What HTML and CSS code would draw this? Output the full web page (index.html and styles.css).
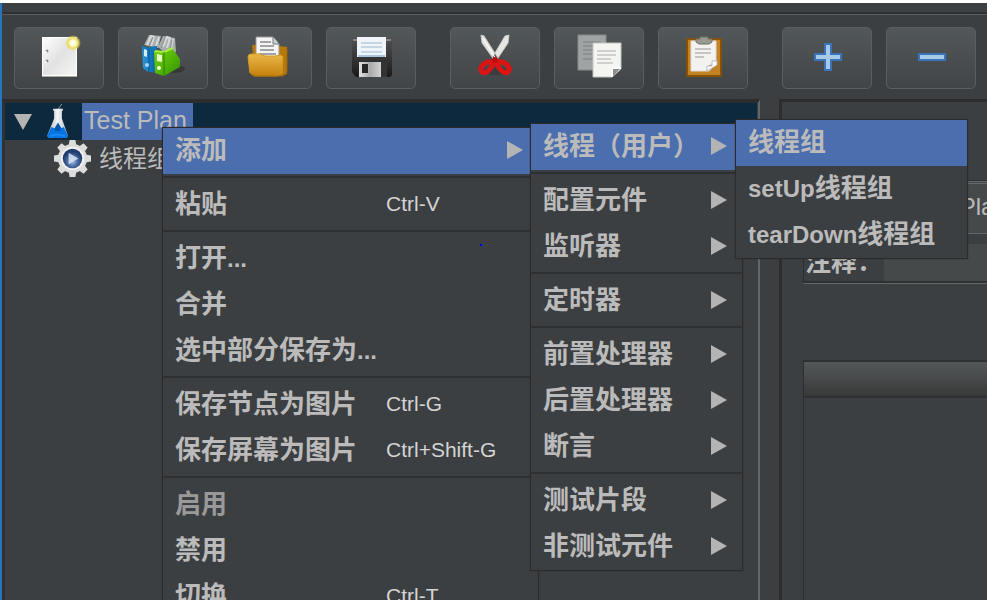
FILE: index.html
```html
<!DOCTYPE html>
<html lang="zh-CN">
<head>
<meta charset="utf-8">
<title>Test Plan</title>
<link rel="stylesheet" href="styles.css">
</head>
<body>
<div class="window">
  <header class="toolbar" role="toolbar">
    <button class="tool" type="button" aria-label="新建">
      <svg viewBox="0 0 48 48">
        <defs>
          <linearGradient id="paper" x1="0" y1="0" x2="1" y2="1"><stop offset="0" stop-color="#fff"/><stop offset=".5" stop-color="#e2e2e2"/><stop offset="1" stop-color="#f6f6f6"/></linearGradient>
          <radialGradient id="glow"><stop offset="0" stop-color="#fff"/><stop offset=".35" stop-color="#fffbd0"/><stop offset=".65" stop-color="#e8dc60"/><stop offset="1" stop-color="#f0e050" stop-opacity="0"/></radialGradient>
        </defs>
        <rect x="7.500" y="4.500" width="34" height="38" fill="url(#paper)" stroke="#fff"/>
        <path d="M7 43.500h35" stroke="#a8a8a0"/>
        <circle cx="12" cy="18" r="1.500" fill="#888"/><circle cx="12" cy="28" r="1.500" fill="#888"/>
        <circle cx="11" cy="19" r="1" fill="#fff"/><circle cx="11" cy="29" r="1" fill="#fff"/>
        <circle cx="38" cy="10" r="8" fill="url(#glow)"/>
      </svg>
    </button>
    <button class="tool" type="button" aria-label="模板">
      <svg viewBox="0 0 48 48">
        <defs>
          <linearGradient id="green" x1="0" y1="0" x2="1" y2="1"><stop offset="0" stop-color="#79d80e"/><stop offset="1" stop-color="#329300"/></linearGradient>
          <linearGradient id="blue"><stop offset="0" stop-color="#2d9bd8"/><stop offset="1" stop-color="#075d9f"/></linearGradient>
        </defs>
        <ellipse cx="34" cy="36" rx="12" ry="4" fill="#222" opacity=".45"/>
        <path d="M5 12 10 2l12 1-3 12zM19 14l5-11 12 2 1 14-10 2z" fill="#a9adb0"/>
        <path d="m8 12 4-9 3 1-3 9m5 0 3-9M24 14l4-10 3 1-3 10m4 0 2-9" fill="none" stroke="#d8dada" stroke-width="2"/>
        <path d="m10 14 4-10m8 11 4-10m5 12 2-10" stroke="#888d90"/>
        <path d="m3 13 6 2v24l-5-4zM10 14l8-1v27l-7-1z" fill="url(#blue)"/>
        <path d="m3 13 7 2 8-2-1 5-7 1-6-2z" fill="#1678b8"/>
        <path d="M9 15h2v24l-2-1z" fill="#0d6cad"/>
        <path d="m5 16 3 1v7l-3-1z" fill="#d4edf8"/>
        <circle cx="8" cy="32" r="2" fill="#a6d6ef"/>
        <path d="m15 18 10 1v24l-9-3zM25 18l8-3 8 11v8l-16 9z" fill="url(#green)"/>
        <path d="m16 18 9 1 9-4" stroke="#a5ee40" stroke-width="2" fill="none"/>
        <path d="M25 19v24" stroke="#278000"/>
        <path d="m18 21 5 1v7l-5-1z" fill="#e8f8c7"/><circle cx="20" cy="35" r="2" fill="#eaffd4"/>
      </svg>
    </button>
    <button class="tool" type="button" aria-label="打开">
      <svg viewBox="0 0 48 48">
        <defs><linearGradient id="folder" x1="0" y1="0" x2="0" y2="1"><stop offset="0" stop-color="#e9b84a"/><stop offset="1" stop-color="#c5800b"/></linearGradient></defs>
        <path d="M9 12h8v11h13l6-10 8 1v27l-5 2H12z" fill="#b87807"/>
        <path d="M13 4h17l6 7v16H13z" fill="#f5f5f5" stroke="#999"/>
        <path d="M30 4v7h6" fill="#c9d0d4" stroke="#777"/>
        <path d="M17 9h11M17 13h14M17 17h14M16 21h17" stroke="#a3a3a3" stroke-width="2"/>
        <path d="M5 24q0-3 3-3h9l5 2h10l6-1 2 2-1 16-4 3H11l-4-3z" fill="url(#folder)" stroke="#d49a20"/>
        <path d="M7 40q3 3 6 3h27l4-4V16" fill="none" stroke="#9e6604" stroke-width="1"/>
      </svg>
    </button>
    <button class="tool" type="button" aria-label="保存">
      <svg viewBox="0 0 48 48">
        <defs>
          <linearGradient id="disk" x1="0" y1="0" x2="0" y2="1"><stop offset="0" stop-color="#555"/><stop offset="1" stop-color="#191919"/></linearGradient>
          <linearGradient id="metal"><stop offset="0" stop-color="#e2e2e2"/><stop offset=".5" stop-color="#aaa"/><stop offset="1" stop-color="#d2d2d2"/></linearGradient>
        </defs>
        <path d="M7 3h36l2 2v37l-2 2H9l-4-5V6z" fill="url(#disk)"/>
        <path d="M6 7h5m28 0h5" stroke="#bbb"/>
        <path d="M10 4h29v20H10z" fill="#eef6fc"/>
        <path d="M11 23h27" stroke="#a9c4d8" stroke-width="2"/>
        <path d="M14 10h21M14 14h21M14 19h21" stroke="#9eb7cb"/>
        <path d="M12 29h28v15H12z" fill="#333"/><path d="M12 29h22v15H12z" fill="url(#metal)"/>
        <path d="M15 31h6v9h-6z" fill="#262626"/>
      </svg>
    </button>
    <button class="tool group-start" type="button" aria-label="剪切">
      <svg viewBox="0 0 48 48">
        <ellipse cx="25" cy="38" rx="13" ry="4" fill="#222" opacity=".3"/>
        <path d="m10 2 1 8 13 18 3-3L13 3zM38 2l-1 8-12 18-4-3L34 3z" fill="#e5e5e2" stroke="#c9c9c5"/>
        <path d="m12 5 13 21" stroke="#fff"/>
        <g fill="none" stroke="#dc1414" stroke-width="5">
          <path d="M22 29q0 4-3 7-4 5-8 3-3-4 2-8 3-3 9-2z"/><path d="M26 29q0 4 3 7 4 5 8 3 3-4-2-8-3-3-9-2z"/>
        </g>
        <circle cx="24" cy="27" r="3" fill="#b91212"/>
      </svg>
    </button>
    <button class="tool" type="button" aria-label="复制">
      <svg viewBox="0 0 48 48">
        <path d="M3 2h28v35H3z" fill="#a0a3a3" stroke="#888"/>
        <path d="M8 9h18M8 13h18M8 17h18M8 21h18M8 26h18" stroke="#7c8080"/>
        <path d="M18 10h28v26l-9 8H18z" fill="#f4f4f1" stroke="#c4c4c0"/>
        <path d="M37 44v-9h9z" fill="#8e8e8c"/><path d="M37 44v-9h9" fill="none" stroke="#fff" stroke-width="2"/>
        <path d="M22 18h19M22 22h19M22 26h14M22 30h16" stroke="#aaa"/>
      </svg>
    </button>
    <button class="tool" type="button" aria-label="粘贴">
      <svg viewBox="0 0 48 48">
        <rect x="8" y="6" width="34" height="37" rx="1" fill="#c38224" stroke="#885200" stroke-width="2"/>
        <path d="M12 8h25v23l-7 7H12z" fill="#f2f2ef" stroke="#ddd"/>
        <path d="M16 16h16M16 20h16M16 24h9" stroke="#999"/>
        <path d="m28 38 2-6 7-1z" fill="#999"/><path d="M28 38v-5h5v-5h5v4z" fill="#fff" stroke="#bbb"/>
        <path d="M17 9V6h4V4h8v2h4v3l-3 2H20z" fill="#999b8e" stroke="#6e7067"/>
      </svg>
    </button>
    <button class="tool group-start" type="button" aria-label="展开">
      <svg viewBox="0 0 48 48"><path d="M22 11h6v10h10v6H28v10h-6V27H12v-6h10z" fill="#a9c9e9" stroke="#3973b8" stroke-width="2"/></svg>
    </button>
    <button class="tool" type="button" aria-label="折叠">
      <svg viewBox="0 0 48 48"><path d="M12 21h26v6H12z" fill="#a9c9e9" stroke="#3973b8" stroke-width="2"/></svg>
    </button>
  </header>

  <main class="split">
    <nav class="tree">
      <div class="node selected">
        <svg class="twisty" viewBox="0 0 18 16"><path d="M0 0h18L9 16z" fill="#b4b4b4"/></svg>
        <svg class="flask" viewBox="0 0 24 38">
          <defs><linearGradient id="glass"><stop offset="0" stop-color="#a0abb2"/><stop offset=".5" stop-color="#f4f6f7"/><stop offset="1" stop-color="#b5bdc2"/></linearGradient></defs>
          <path d="m12 9 1-4 3-4" fill="none" stroke="#899"/>
          <path d="M7 6h10v2h-1v8l6 17q0 3-4 3H5q-4 0-4-3l7-17V8H7z" fill="url(#glass)"/>
          <path d="M5 25q7 2 13 0l4 8q0 3-4 3H5q-4 0-4-3z" fill="#0875e5"/>
          <path d="m9 25 3-5 3 5-1 4H9z" fill="#0757aa"/><path d="M4 34q8-3 15 0" stroke="#1b8cf4" stroke-width="2" fill="none"/>
        </svg>
        <span class="node-label">Test Plan</span>
      </div>
      <div class="node child">
        <svg class="gear" viewBox="0 0 38 38">
          <defs><radialGradient id="orb" cx=".5" cy=".65"><stop offset="0" stop-color="#9fc0ea"/><stop offset=".55" stop-color="#49699f"/><stop offset="1" stop-color="#203b70"/></radialGradient></defs>
          <g fill="#dcdcdc">
            <circle cx="19" cy="19" r="15"/>
            <path id="teeth" d="M15 6 16 0h6l1 6v26l-1 6h-6l-1-6z"/>
            <use href="#teeth" transform="rotate(45 19 19)"/><use href="#teeth" transform="rotate(90 19 19)"/><use href="#teeth" transform="rotate(135 19 19)"/>
          </g>
          <circle cx="19" cy="19" r="12" fill="#f2f2f2"/><circle cx="19" cy="19" r="10" fill="url(#orb)"/>
          <path d="m15 13 10 6-10 6z" fill="#d9e5f7" opacity=".85"/>
        </svg>
        <span class="node-label">线程组</span>
      </div>
    </nav>

    <section class="editor">
      <div class="field name-field"><input type="text" aria-label="名称" value="Test Plan"></div>
      <div class="field comment-field"><label for="comment">注释：</label><input id="comment" type="text"></div>
      <div class="grid"><div class="grid-head"></div></div>
    </section>
  </main>
</div>

<div class="menu menu-main" role="menu">
  <button class="item active" type="button" role="menuitem"><span>添加</span><i class="arrow"></i></button>
  <hr>
  <button class="item" type="button" role="menuitem"><span>粘贴</span><kbd>Ctrl-V</kbd></button>
  <hr>
  <button class="item" type="button" role="menuitem"><span>打开<b>...</b></span></button>
  <button class="item" type="button" role="menuitem"><span>合并</span></button>
  <button class="item" type="button" role="menuitem"><span>选中部分保存为<b>...</b></span></button>
  <hr>
  <button class="item" type="button" role="menuitem"><span>保存节点为图片</span><kbd>Ctrl-G</kbd></button>
  <button class="item" type="button" role="menuitem"><span>保存屏幕为图片</span><kbd>Ctrl+Shift-G</kbd></button>
  <hr>
  <button class="item" type="button" role="menuitem" disabled><span>启用</span></button>
  <button class="item" type="button" role="menuitem"><span>禁用</span></button>
  <button class="item" type="button" role="menuitem"><span>切换</span><kbd>Ctrl-T</kbd></button>
</div>

<div class="menu menu-add" role="menu">
  <button class="item active" type="button" role="menuitem"><span>线程（用户）</span><i class="arrow"></i></button>
  <hr>
  <button class="item" type="button" role="menuitem"><span>配置元件</span><i class="arrow"></i></button>
  <button class="item" type="button" role="menuitem"><span>监听器</span><i class="arrow"></i></button>
  <hr>
  <button class="item" type="button" role="menuitem"><span>定时器</span><i class="arrow"></i></button>
  <hr>
  <button class="item" type="button" role="menuitem"><span>前置处理器</span><i class="arrow"></i></button>
  <button class="item" type="button" role="menuitem"><span>后置处理器</span><i class="arrow"></i></button>
  <button class="item" type="button" role="menuitem"><span>断言</span><i class="arrow"></i></button>
  <hr>
  <button class="item" type="button" role="menuitem"><span>测试片段</span><i class="arrow"></i></button>
  <button class="item" type="button" role="menuitem"><span>非测试元件</span><i class="arrow"></i></button>
</div>

<div class="menu menu-threads" role="menu">
  <button class="item active" type="button" role="menuitem"><span>线程组</span></button>
  <button class="item" type="button" role="menuitem"><span><b>setUp</b>线程组</span></button>
  <button class="item" type="button" role="menuitem"><span><b>tearDown</b>线程组</span></button>
</div>
<div class="marker"></div>
</body>
</html>
```
FILE: styles.css
```css
* {
  box-sizing: border-box;
}

body {
  position: relative;
  height: 100vh;
  margin: 0;
  overflow: hidden;
  background: #3c3f41;
  color: #bbb;
  font-family: "Liberation Sans", "Noto Sans CJK SC", sans-serif;
}

button,
input {
  font: inherit;
  color: inherit;
}

.window {
  display: flex;
  flex-direction: column;
  height: 100%;
  border-top: 3px solid #fff;
}

.window::before {
  content: "";
  flex: none;
  height: 11px;
  border-left: 2px solid #2675bf;
  border-bottom: 1px solid #5a5d5f;
  box-shadow: inset 0 -2px #2e3031;
}

.toolbar {
  display: flex;
  flex: none;
  gap: 14px;
  padding: 12px 12px 10px;
  border-left: 2px solid #2675bf;
}

.tool {
  display: flex;
  flex: none;
  align-items: center;
  justify-content: center;
  width: 90px;
  height: 62px;
  padding: 0 0 2px;
  border: 1px solid #5b5d5e;
  border-radius: 5px;
  background: linear-gradient(#525759, #414547);
}

.tool svg {
  width: 48px;
  height: 48px;
}

.group-start {
  margin-left: 20px;
}

.split {
  display: flex;
  flex: 1;
  min-height: 0;
  border-left: 2px solid #2675bf;
}

.tree {
  flex: 0 1 758px;
  border-top: 4px solid #2b2d2e;
  border-left: 3px solid #2f3132;
  border-right: 2px solid #646769;
}

.node {
  display: flex;
  align-items: center;
  height: 37px;
  font-size: 25px;
  line-height: 37px;
}

.selected {
  padding-left: 9px;
  margin-right: 1px;
  background: #0d293e;
}

.selected .node-label {
  height: 37px;
  padding: 0 6px 0 2px;
  line-height: 34px;
  background: #4b6eaf;
}

.child {
  gap: 8px;
  padding-left: 49px;
  font-size: 24px;
}

.twisty {
  width: 18px;
  height: 16px;
  margin-right: 14px;
}

.flask {
  width: 24px;
  height: 37px;
  margin-right: 12px;
}

.gear {
  width: 37px;
  height: 37px;
}

.editor {
  flex: 1;
  min-width: 0;
  margin-left: 19px;
  padding: 78px 0 0 21px;
  border-top: 3px solid #2b2d2e;
  border-left: 3px solid #2b2d2e;
  display: flex;
  flex-direction: column;
}

.field {
  display: flex;
  flex: none;
}

.field input {
  flex: 1;
  min-width: 0;
  border: 0;
  padding: 0 0 0 4px;
  outline: 0;
  background: #45494a;
}

.name-field {
  height: 54px;
  margin-left: 102px;
  border-top: 1px solid #2e3031;
  border-bottom: 1px solid #646769;
  font-size: 24px;
}

.name-field input {
  border-top: 3px double #646769;
  padding-bottom: 3px;
}

.comment-field {
  height: 40px;
  margin-top: 10px;
  border-left: 1px solid #2b2d2e;
  border-bottom: 1px solid #646769;
  box-shadow: inset 0 -2px #2e3031;
  padding-bottom: 2px;
}

.comment-field label {
  width: 80px;
  padding-left: 1px;
  font-size: 26px;
  font-weight: 700;
  line-height: 37px;
}

.grid {
  flex: 1;
  margin-top: 76px;
  border-top: 2px solid #2e3031;
  border-left: 1px solid #2b2d2e;
}

.grid-head {
  height: 36px;
  border-bottom: 2px solid #2e3031;
  background: linear-gradient(#54585a, #393939);
}

.menu {
  position: absolute;
  border: 1px solid #2b2b2b;
  background: #3c3f41;
  box-shadow: 0 0 1px #2b2b2b;
}

.menu-main {
  top: 127px;
  left: 162px;
  width: 377px;
}

.menu-add {
  top: 123px;
  left: 530px;
  width: 213px;
}

.menu-threads {
  top: 119px;
  left: 735px;
  width: 233px;
}

.menu hr {
  height: 8px;
  margin: 0;
  border: 0;
  background: linear-gradient(#2f3031, #2f3031) 0 2px / 100% 2px no-repeat;
}

.item {
  display: flex;
  align-items: center;
  width: 100%;
  height: 46px;
  padding: 0 15px 2px 12px;
  border: 0;
  background: none;
  font-size: 26px;
  font-weight: 700;
  line-height: 44px;
  text-align: left;
  white-space: nowrap;
}

.item b {
  font-size: 24px;
}

.item:disabled {
  color: #999;
}

.item.active {
  background: #4b6eaf;
}

.menu-main .item span {
  flex: 0 0 211px;
}

.item kbd {
  font-family: inherit;
  font-size: 21px;
  font-weight: 400;
  color: #d4d4d4;
}

.arrow {
  width: 16px;
  height: 18px;
  margin-left: auto;
  background: #b4b4b4;
  clip-path: polygon(0 0, 100% 50%, 0 100%);
}

.marker {
  position: absolute;
  top: 244px;
  left: 480px;
  width: 2px;
  height: 2px;
  background: #00f;
}
```
